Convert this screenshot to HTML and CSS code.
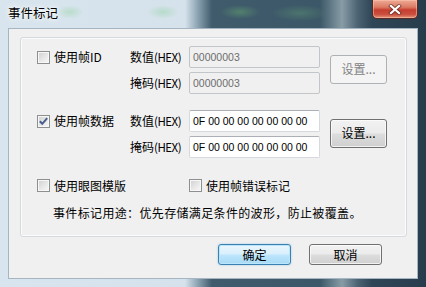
FILE: index.html
```html
<!DOCTYPE html>
<html lang="zh-CN">
<head>
<meta charset="utf-8">
<title>事件标记</title>
<link rel="stylesheet" href="styles.css">
</head>
<body>
<div class="window">
  <div class="titlebar">
    <span class="title">事件标记</span>
    <div class="close">
      <svg width="14" height="11" viewBox="0 0 14 11">
        <path d="M3 2 L11 9 M11 2 L3 9" stroke="#3a1a14" stroke-width="4" stroke-linecap="square" opacity="0.55"/>
        <path d="M3 2 L11 9 M11 2 L3 9" stroke="#ffffff" stroke-width="2.2" stroke-linecap="square"/>
      </svg>
    </div>
  </div>
  <div class="client">
    <div class="group">
      <div class="section">
        <label class="chk"><span class="box"></span>使用帧ID</label>
        <span class="lbl">数值<span class="hex">(HEX)</span></span>
        <div class="field disabled">00000003</div>
        <button class="btn set" disabled>设置...</button>
        <span class="lbl row2">掩码<span class="hex">(HEX)</span></span>
        <div class="field disabled row2">00000003</div>
      </div>
      <div class="section">
        <label class="chk"><span class="box checked"><svg width="11" height="11" viewBox="0 0 11 11"><path d="M1.8 5.2 L4.3 7.8 L9.2 2.2" fill="none" stroke="#4b5f8f" stroke-width="2"/></svg></span>使用帧数据</label>
        <span class="lbl">数值<span class="hex">(HEX)</span></span>
        <div class="field">0F 00 00 00 00 00 00 00</div>
        <button class="btn set">设置...</button>
        <span class="lbl row2">掩码<span class="hex">(HEX)</span></span>
        <div class="field row2">0F 00 00 00 00 00 00 00</div>
      </div>
      <div class="opts">
        <label class="chk opt"><span class="box"></span>使用眼图模版</label>
        <label class="chk opt"><span class="box"></span>使用帧错误标记</label>
      </div>
      <p class="note">事件标记用途：优先存储满足条件的波形，防止被覆盖。</p>
    </div>
    <div class="actions">
      <button class="btn default">确定</button>
      <button class="btn">取消</button>
    </div>
  </div>
</div>
</body>
</html>
```
FILE: styles.css
```css
* { box-sizing: border-box; }
html, body { margin: 0; padding: 0; }
body {
  width: 426px;
  height: 287px;
  overflow: hidden;
  font-family: "Noto Sans CJK SC", "Liberation Sans", sans-serif;
  font-size: 12px;
  color: #000;
}
.window {
  width: 426px;
  height: 287px;
  display: flex;
  flex-direction: column;
  padding: 0 8px 8px 8px;
  background:
    radial-gradient(ellipse 14px 7px at 70px 12px, rgba(160,215,175,0.55), transparent),
    radial-gradient(ellipse 16px 7px at 163px 12px, rgba(150,210,170,0.5), transparent),
    radial-gradient(ellipse 20px 7px at 240px 12px, rgba(100,160,110,0.55), transparent),
    radial-gradient(ellipse 28px 8px at 300px 13px, rgba(95,150,115,0.45), transparent),
    linear-gradient(90deg, #d9e5ee 0, #d6e2eb 185px, #8aa2b1 198px, #3f5b6c 212px, #3c5868 320px, #889ca6 342px, #4a6272 358px, #2f4657 372px, #283d4c 426px);
}
.titlebar {
  height: 28px;
  flex: none;
  display: flex;
  align-items: flex-start;
}
.title {
  margin-top: 5px;
  font-size: 12.5px;
  line-height: 16px;
  color: #000;
  text-shadow: 0 0 6px #fff, 0 0 3px #fff;
}
.close {
  margin-left: auto;
  width: 46px;
  height: 19px;
  border: 1px solid #5a2a24;
  border-top: none;
  border-radius: 0 0 5px 5px;
  background: linear-gradient(180deg, #eeab96 0%, #dc7a64 40%, #c63e2f 55%, #cc4f3e 80%, #e49478 100%);
  box-shadow: inset 0 0 0 1px rgba(255,200,180,0.5);
  display: flex;
  align-items: center;
  justify-content: center;
}
.client {
  flex: 1;
  background: #f0f0f0;
  border: 1px solid #a6b5c2;
  display: flex;
  flex-direction: column;
}
.group {
  margin: 8px 10px 0 11px;
  border: 1px solid #d5dadf;
  border-radius: 3px;
  box-shadow: inset 0 0 0 1px #fbfbfb;
  padding: 8px 0 16px 16px;
}
.section {
  display: grid;
  grid-template-columns: 93px 59px 131px 67px;
  grid-template-rows: 22px 22px;
  row-gap: 4px;
  margin-bottom: 16px;
}
.section:nth-child(2) { margin-bottom: 21px; }
.chk {
  display: flex;
  align-items: center;
  gap: 4px;
  line-height: 14px;
  white-space: nowrap;
}
.section .chk { grid-row: 1; grid-column: 1; align-self: center; }
.box {
  width: 13px;
  height: 13px;
  flex: none;
  border: 1px solid #8e8f8f;
  background: linear-gradient(135deg, #cfcfcf 0%, #e8e8e8 55%, #f8f8f8 100%);
  box-shadow: inset 0 0 0 1px #f7f7f7;
  display: flex;
  align-items: center;
  justify-content: center;
}
.lbl {
  align-self: center;
  line-height: 14px;
  white-space: nowrap;
}
.hex {
  font-size: 11.5px;
  letter-spacing: -0.5px;
}
.row2 { grid-row: 2; }
.lbl.row2 { grid-column: 2; }
.field.row2 { grid-column: 3; }
.field {
  height: 22px;
  border: 1px solid #d6dadf;
  border-top-color: #acb0b6;
  border-radius: 2px;
  background: #fff;
  padding: 0 3px;
  font-family: "Liberation Sans", sans-serif;
  font-size: 10.5px;
  line-height: 20px;
  color: #000;
  white-space: nowrap;
}
.field.disabled {
  background: #f0f0f0;
  border-color: #c2c5c9;
  color: #6d6d6d;
}
.btn {
  font-family: "Noto Sans CJK SC", sans-serif;
  font-size: 12px;
  color: #000;
  padding: 0;
  border: 1px solid #707070;
  border-radius: 3px;
  background: linear-gradient(180deg, #f2f2f2 0%, #ebebeb 48%, #dddddd 52%, #cfcfcf 100%);
  box-shadow: inset 0 0 0 1px rgba(255,255,255,0.7);
  line-height: 16px;
}
.btn.set {
  grid-row: 1 / 3;
  grid-column: 4;
  justify-self: end;
  align-self: center;
  width: 57px;
  height: 29px;
  margin-top: -2px;
}
.btn:disabled {
  border-color: #adb2b5;
  background: #f4f4f4;
  color: #838383;
  box-shadow: none;
}
.opts {
  display: flex;
  height: 13px;
  align-items: center;
}
.opt { width: 152px; }
.note {
  margin: 14px 0 0 16px;
  line-height: 14px;
  letter-spacing: 0.35px;
  white-space: nowrap;
}
.actions {
  display: flex;
  justify-content: flex-end;
  gap: 18px;
  padding: 7px 35px 0 0;
}
.actions .btn {
  width: 73px;
  height: 21px;
}
.btn.default {
  border-color: #3c7fb1;
  background: linear-gradient(180deg, #eaf6fd 0%, #d9f0fc 48%, #bee6fd 52%, #a7d9f5 100%);
  box-shadow: inset 0 0 0 1px #b9e6fb, 0 0 2px rgba(60,160,230,0.5);
}
```
